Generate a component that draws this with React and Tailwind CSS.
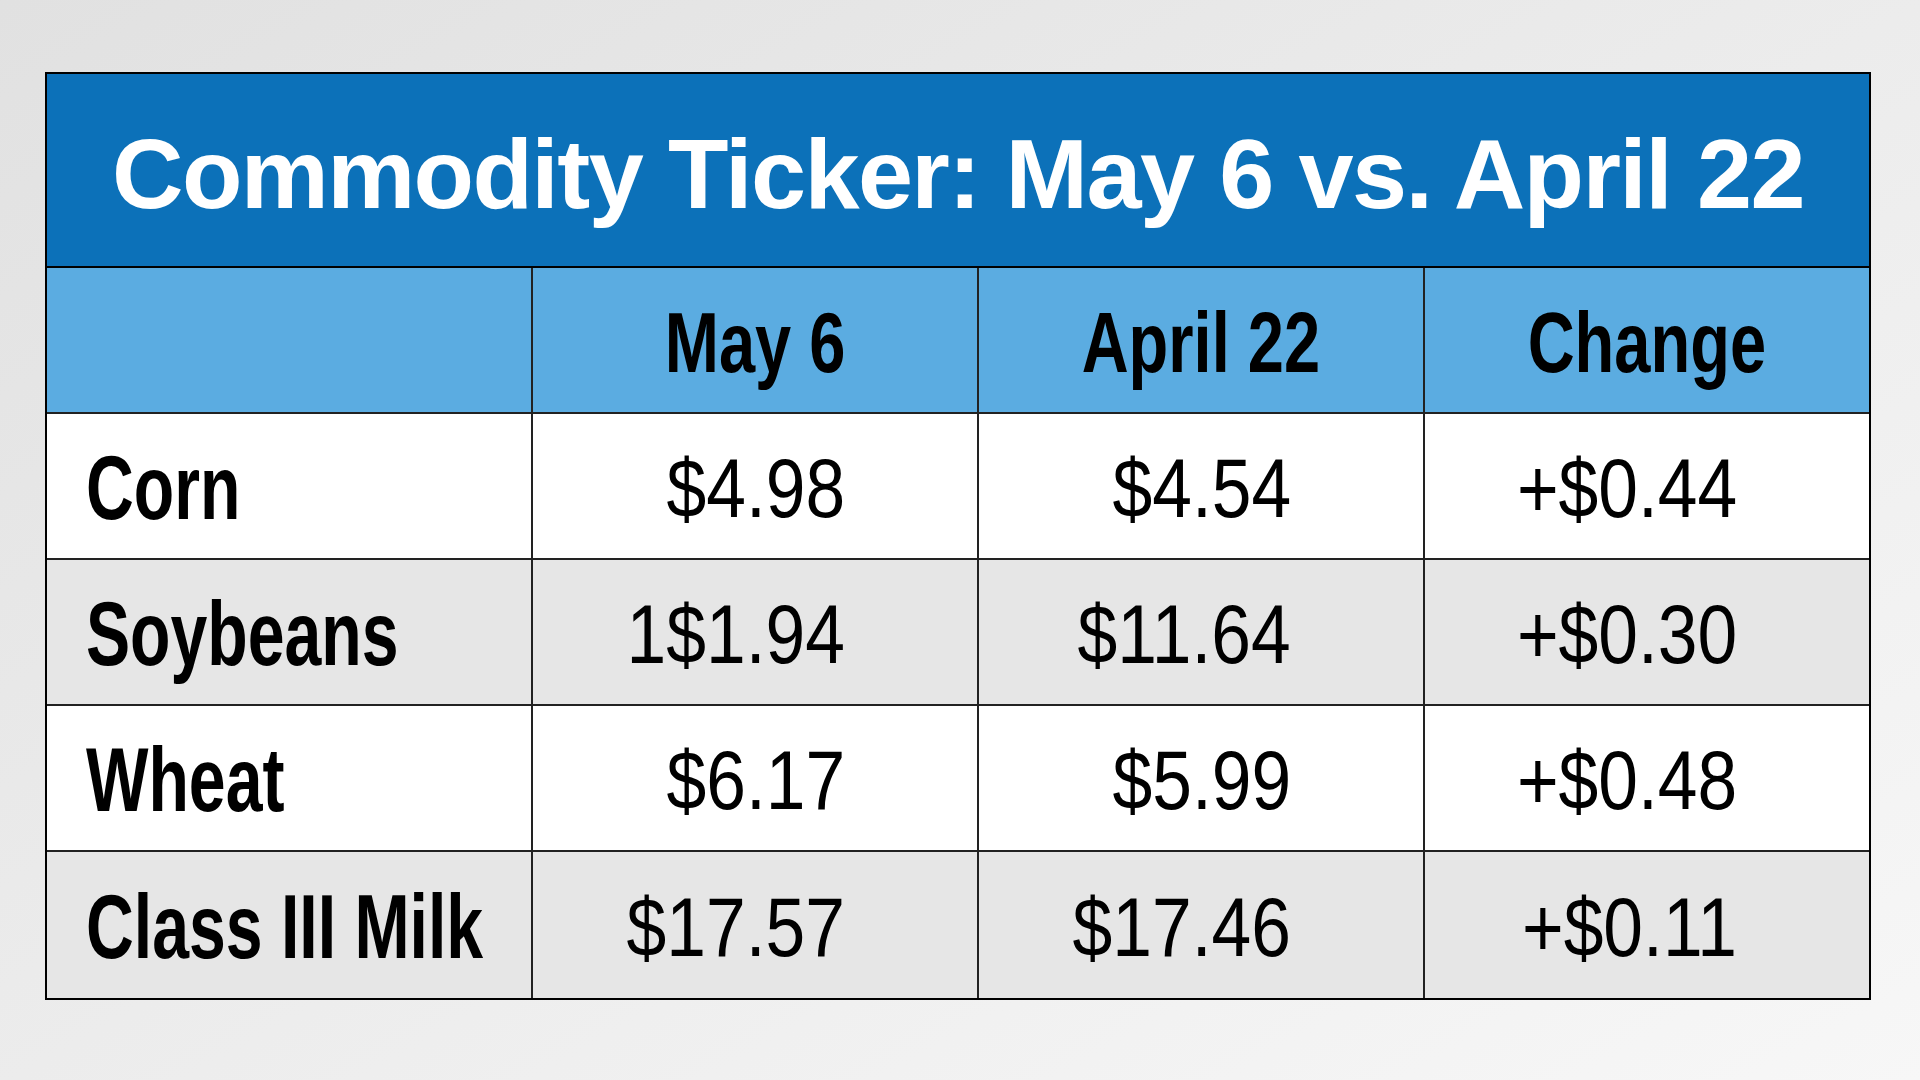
import React from 'react';

const rows = [
  { name: 'Corn', may: '$4.98', april: '$4.54', change: '+$0.44', bg: 'bg-white' },
  { name: 'Soybeans', may: '1$1.94', april: '$11.64', change: '+$0.30', bg: 'bg-[#e6e6e6]' },
  { name: 'Wheat', may: '$6.17', april: '$5.99', change: '+$0.48', bg: 'bg-white' },
  { name: 'Class III Milk', may: '$17.57', april: '$17.46', change: '+$0.11', bg: 'bg-[#e6e6e6]' },
];

const HeadCell = ({ children, last }) => (
  <div className={`flex items-center justify-center pt-[4px] ${last ? '' : 'border-r-2 border-[#222]'}`}>
    <span className="inline-block origin-center scale-x-[0.765] text-[85px] font-bold leading-none text-black">{children}</span>
  </div>
);

const ValueCell = ({ children, last }) => (
  <div className={`flex items-center justify-end pr-[132px] pt-[4px] ${last ? '' : 'border-r-2 border-[#222]'}`}>
    <span className="inline-block origin-right scale-x-[0.85] text-[84px] font-normal leading-none text-black">{children}</span>
  </div>
);

const App = () => {
  return (
    <div className="min-h-screen w-full bg-linear-to-br from-[#e1e1e1] to-[#f7f7f7] pl-[45px] pt-[72px] font-['Liberation_Sans',Arial,sans-serif]">
      <div className="w-[1826px] border-2 border-black">
        <div className="flex h-[194px] items-center justify-center border-b-2 border-black bg-[#0c71b9] pt-[6px]">
          <h1 className="text-[99px] font-bold leading-none tracking-[-1.6px] text-white">Commodity Ticker: May 6 vs. April 22</h1>
        </div>

        <div className="grid h-[146px] grid-cols-[486px_446px_446px_444px] border-b-2 border-[#222] bg-[#5bace1]">
          <div className="border-r-2 border-[#222]" />
          <HeadCell>May 6</HeadCell>
          <HeadCell>April 22</HeadCell>
          <HeadCell last>Change</HeadCell>
        </div>

        {rows.map((row, i) => (
          <div
            key={row.name}
            className={`grid h-[146px] grid-cols-[486px_446px_446px_444px] ${row.bg} ${i < rows.length - 1 ? 'border-b-2 border-[#222]' : ''}`}
          >
            <div className="flex items-center border-r-2 border-[#222] pl-[39px] pt-[4px]">
              <span className="inline-block origin-left scale-x-[0.735] whitespace-nowrap text-[90px] font-bold leading-none text-black">{row.name}</span>
            </div>
            <ValueCell>{row.may}</ValueCell>
            <ValueCell>{row.april}</ValueCell>
            <ValueCell last>{row.change}</ValueCell>
          </div>
        ))}
      </div>
    </div>
  );
};

export default App;
